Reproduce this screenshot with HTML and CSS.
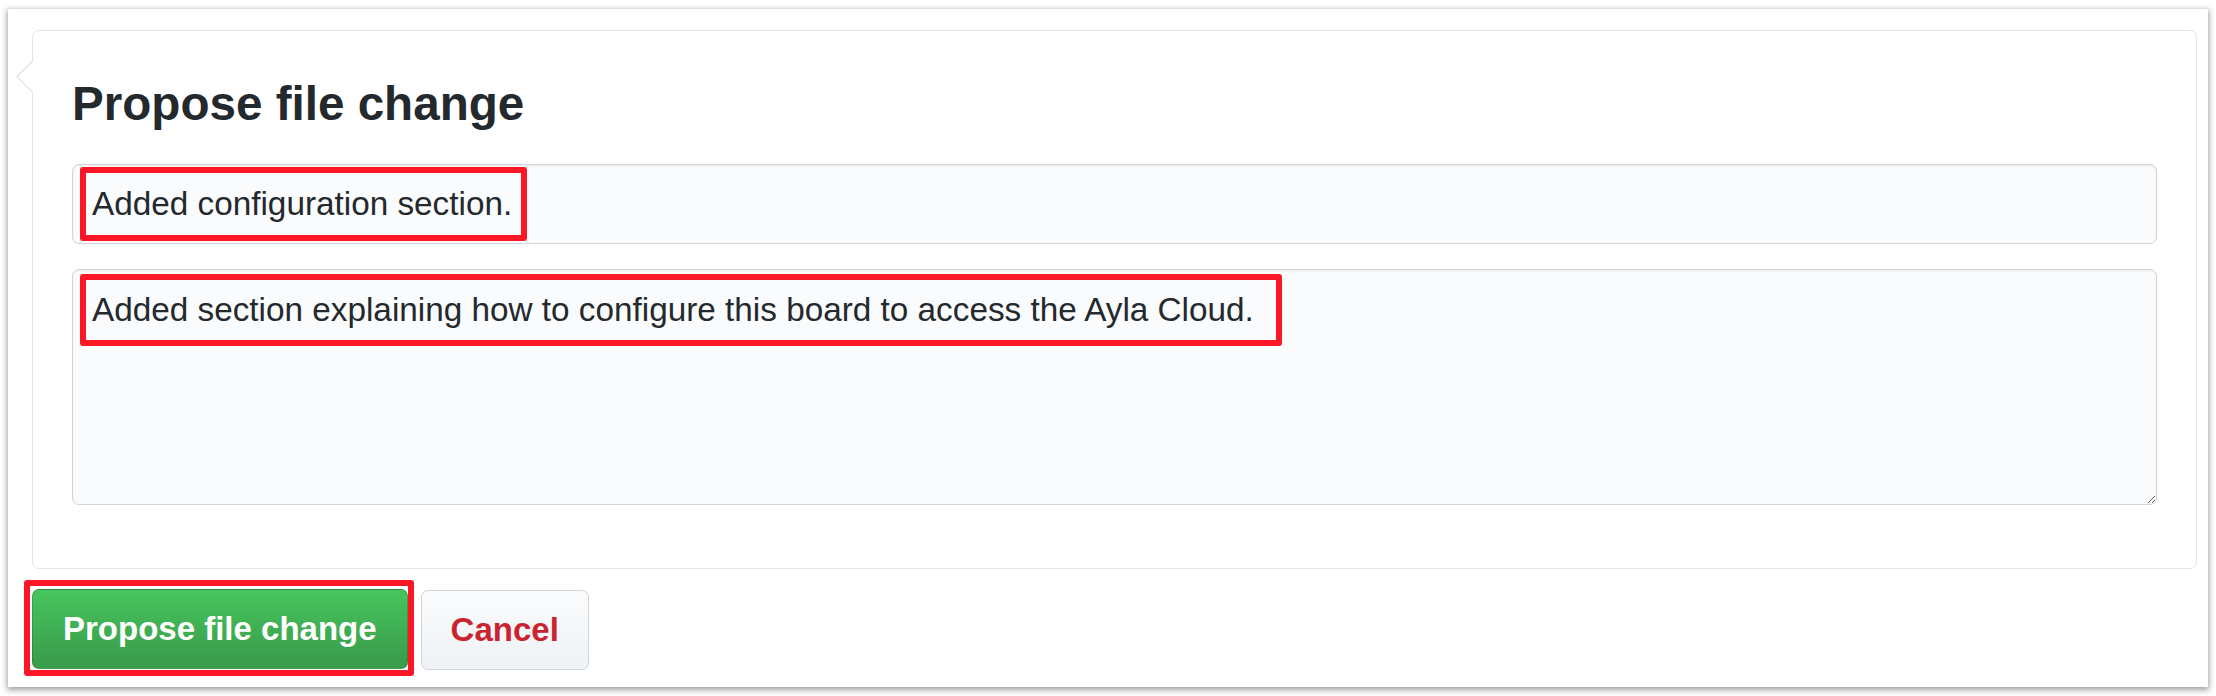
FILE: index.html
```html
<!DOCTYPE html>
<html lang="en">
<head>
<meta charset="utf-8">
<title>Propose file change</title>
<link rel="stylesheet" href="styles.css">
</head>
<body>
<div class="card">
  <div class="box">
    <span class="caret"></span>
    <h3 class="title">Propose file change</h3>
    <div class="field">
      <input class="input" type="text" value="Added configuration section.">
      <span class="mark mark-title"></span>
    </div>
    <div class="field field-area">
      <textarea class="textarea">Added section explaining how to configure this board to access the Ayla Cloud.</textarea>
      <span class="mark mark-desc"></span>
    </div>
  </div>
  <div class="actions">
    <span class="marked">
      <button class="btn btn-primary" type="button">Propose file change</button>
      <span class="mark mark-btn"></span>
    </span>
    <button class="btn btn-cancel" type="button">Cancel</button>
  </div>
</div>
</body>
</html>
```

FILE: styles.css
```css
* { box-sizing: border-box; }

html, body {
  margin: 0;
  padding: 0;
  background: #ffffff;
}

body {
  font-family: "Liberation Sans", Arial, sans-serif;
  color: #24292e;
  padding: 9px 8px;
}

.card {
  background: #ffffff;
  height: 678px;
  padding: 21px 11px 17px 24px;
  box-shadow: 0 2px 6px 1px rgba(0, 0, 0, 0.38);
}

.box {
  position: relative;
  border: 1px solid #e1e4e8;
  border-radius: 7px;
  padding: 0 39px 63px 39px;
  background: #ffffff;
}

.caret {
  position: absolute;
  left: -12px;
  top: 34px;
  width: 23px;
  height: 23px;
  background: #ffffff;
  border-left: 1px solid #d8dce1;
  border-bottom: 1px solid #d8dce1;
  transform: rotate(45deg);
}

.title {
  margin: 44px 0 31px;
  font-size: 47.6px;
  line-height: 58px;
  font-weight: 700;
  color: #24292e;
}

.field {
  position: relative;
}

.field-area {
  margin-top: 25px;
}

.input,
.textarea {
  display: block;
  width: 100%;
  font-family: "Liberation Sans", Arial, sans-serif;
  font-size: 33.3px;
  color: #24292e;
  background: #fafbfc;
  border: 1px solid #d1d5da;
  border-radius: 7px;
  box-shadow: inset 0 1px 2px rgba(27, 31, 35, 0.075);
  outline: none;
  margin: 0;
}

.input {
  height: 80px;
  padding: 0 19px;
}

.textarea {
  height: 236px;
  padding: 15px 19px;
  line-height: 1.5;
  resize: vertical;
}

.mark {
  position: absolute;
  border: 6px solid #fc1626;
  border-radius: 3px;
  pointer-events: none;
}

.mark-title {
  left: 8px;
  top: 3px;
  width: 447px;
  height: 74px;
}

.mark-desc {
  left: 8px;
  top: 5px;
  width: 1202px;
  height: 72px;
}

.actions {
  display: flex;
  align-items: flex-start;
  gap: 13px;
  margin-top: 20px;
}

.marked {
  position: relative;
  display: block;
}

.mark-btn {
  left: -8px;
  right: -6px;
  top: -9px;
  bottom: -7px;
}

.btn {
  display: block;
  height: 80px;
  padding: 0 30px;
  font-family: "Liberation Sans", Arial, sans-serif;
  font-size: 33px;
  font-weight: 700;
  border: 1px solid rgba(27, 31, 35, 0.2);
  border-radius: 7px;
  cursor: pointer;
}

.btn-primary {
  color: #ffffff;
  background-image: linear-gradient(180deg, #47c55e 0%, #3a9e4b 90%);
}

.btn-cancel {
  margin-top: 1px;
  padding: 0 29px;
  color: #cb2431;
  background-image: linear-gradient(180deg, #fafbfc 0%, #eff3f6 90%);
  border-color: #d1d5da;
}
```
